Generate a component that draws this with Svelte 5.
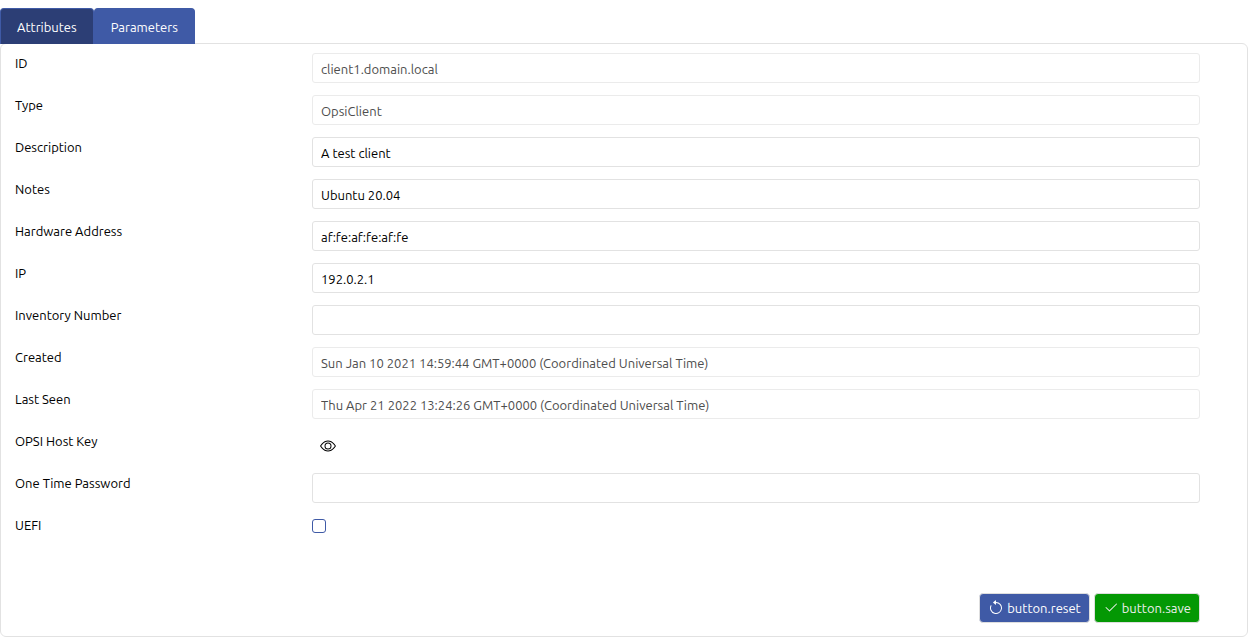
<script>
  const tabs = ['Attributes', 'Parameters'];
  let active = $state('Attributes');

  const initial = () => [
    { id: 'id', label: 'ID', value: 'client1.domain.local', locked: true },
    { id: 'type', label: 'Type', value: 'OpsiClient', locked: true },
    { id: 'description', label: 'Description', value: 'A test client' },
    { id: 'notes', label: 'Notes', value: 'Ubuntu 20.04' },
    { id: 'hardware', label: 'Hardware Address', value: 'af:fe:af:fe:af:fe' },
    { id: 'ip', label: 'IP', value: '192.0.2.1' },
    { id: 'inventory', label: 'Inventory Number', value: '' },
    { id: 'created', label: 'Created', value: 'Sun Jan 10 2021 14:59:44 GMT+0000 (Coordinated Universal Time)', locked: true },
    { id: 'seen', label: 'Last Seen', value: 'Thu Apr 21 2022 13:24:26 GMT+0000 (Coordinated Universal Time)', locked: true },
    { id: 'key', label: 'OPSI Host Key', kind: 'key' },
    { id: 'otp', label: 'One Time Password', value: '' },
    { id: 'uefi', label: 'UEFI', kind: 'check', value: false }
  ];
  let fields = $state(initial());
</script>

<main>
  <div class="tabs" role="tablist">
    {#each tabs as tab}
      <button
        type="button"
        role="tab"
        class="tab"
        class:active={active === tab}
        aria-selected={active === tab}
        onclick={() => (active = tab)}>{tab}</button>
    {/each}
  </div>

  <form class="panel" onsubmit={(e) => e.preventDefault()}>
    <div class="fields">
      {#each fields as field (field.id)}
        <div class="row">
          <label for={field.id}>{field.label}</label>
          {#if field.kind === 'key'}
            <button type="button" class="reveal" id={field.id}>
              <svg viewBox="0 0 16 16" width="16" height="16" fill="currentColor" aria-hidden="true">
                <path d="M16 8s-3-5.500-8-5.500S0 8 0 8s3 5.500 8 5.500S16 8 16 8zM1.173 8a13.133 13.133 0 0 1 1.660-2.043C4.120 4.668 5.880 3.500 8 3.500c2.120 0 3.879 1.168 5.168 2.457A13.133 13.133 0 0 1 14.828 8c-.058.087-.122.183-.195.288-.335.480-.830 1.120-1.465 1.755C11.879 11.332 10.119 12.500 8 12.500c-2.120 0-3.879-1.168-5.168-2.457A13.134 13.134 0 0 1 1.172 8z" />
                <path d="M8 5.500a2.500 2.500 0 1 0 0 5 2.500 2.500 0 0 0 0-5zM4.500 8a3.500 3.500 0 1 1 7 0 3.500 3.500 0 0 1-7 0z" />
              </svg>
            </button>
          {:else if field.kind === 'check'}
            <input class="check" type="checkbox" id={field.id} bind:checked={field.value} />
          {:else}
            <input class="text" type="text" id={field.id} bind:value={field.value} disabled={field.locked} />
          {/if}
        </div>
      {/each}
    </div>

    <div class="actions">
      <button type="button" class="action" onclick={() => (fields = initial())}>
        <svg viewBox="0 0 16 16" width="16" height="16" fill="currentColor" aria-hidden="true">
          <path fill-rule="evenodd" d="M8 3a5 5 0 1 1-4.546 2.914.5.5 0 0 0-.908-.417A6 6 0 1 0 8 2v1z" />
          <path d="M8 4.466V.534a.25.25 0 0 0-.41-.192L5.230 2.308a.25.25 0 0 0 0 .384l2.360 1.966A.25.25 0 0 0 8 4.466z" />
        </svg>
        button.reset
      </button>
      <button type="submit" class="action save">
        <svg viewBox="0 0 16 16" width="16" height="16" fill="currentColor" aria-hidden="true">
          <path d="M13.854 3.646a.5.5 0 0 1 0 .708l-7 7a.5.5 0 0 1-.708 0l-3.500-3.500a.5.5 0 1 1 .708-.708L6.500 10.293l6.646-6.647a.5.5 0 0 1 .708 0z" />
        </svg>
        button.save
      </button>
    </div>
  </form>
</main>

<style>
  :global(body) {
    margin: 0;
    background: #fff;
  }
  main {
    padding-top: 8px;
    color: #000;
    font: 13px/20px Ubuntu, 'Noto Sans', sans-serif;
  }
  button,
  input {
    box-sizing: border-box;
    margin: 0;
    font: inherit;
  }
  .tabs {
    display: flex;
  }
  .tab {
    height: 36px;
    padding: 0 16px;
    border: 1px solid #3f5aa6;
    border-bottom: 0;
    border-radius: 4px 4px 0 0;
    background: #3f5aa6;
    color: #fff;
  }
  .tab.active {
    background: #2c3e75;
  }
  .panel {
    margin-top: -1px;
    padding: 9px 47px 13px 14px;
    border: 1px solid #e2e2e2;
    border-radius: 6px;
  }
  .fields {
    display: grid;
    gap: 12px;
  }
  .row {
    display: grid;
    grid-template-columns: 1fr 3fr;
    column-gap: 1px;
    align-items: start;
    min-height: 30px;
  }
  .text {
    width: 100%;
    height: 30px;
    padding: 2px 8px 0;
    border: 1px solid #e2e2e2;
    border-radius: 3px;
    background: #fff;
    color: #000;
  }
  .text:disabled {
    border-color: #ebebeb;
    color: #4d4d4d;
  }
  .reveal {
    display: flex;
    justify-self: start;
    padding: 7px 8px;
    border: 0;
    background: none;
    color: #000;
  }
  .check {
    appearance: none;
    width: 14px;
    height: 14px;
    margin-top: 4px;
    border: 1px solid #3f5aa6;
    border-radius: 3px;
    background: #fff;
  }
  .check:checked {
    background: #3f5aa6;
  }
  .actions {
    display: flex;
    justify-content: flex-end;
    gap: 4px;
    margin-top: 48px;
  }
  .action {
    display: flex;
    align-items: center;
    gap: 3px;
    height: 30px;
    padding: 0 8px;
    border: 1px solid #dedede;
    border-radius: 4px;
    background: #3f5aa6;
    color: #fff;
  }
  .action.save {
    background: #049804;
    color: #eee;
  }
</style>
